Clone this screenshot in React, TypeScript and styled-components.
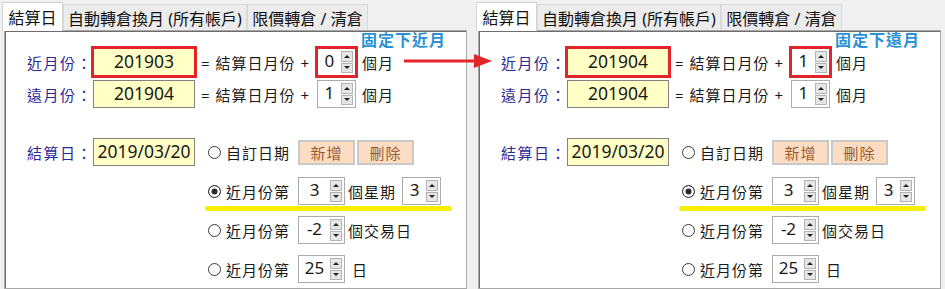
import React from 'react';
import styled, {createGlobalStyle} from "styled-components";

const GlobalStyle = createGlobalStyle`
    body {
        margin: 0;
        font-family: "Noto Sans", "Noto Sans CJK TC", sans-serif;
        color: #1a1a1a;
    }
`

type PanelProps = {
    near: string
    nearOffset: number
    caption: string
}

const Panel = ({near, nearOffset, caption}: PanelProps) => {
    return (
        <Window>
            <TabStrip>
                <Tab $active $w={61}>結算日</Tab>
                <Tab $w={184}>自動轉倉換月 (所有帳戶)</Tab>
                <Tab $w={121}>限價轉倉 / 清倉</Tab>
            </TabStrip>
            <Body>
                <Caption>{caption}</Caption>
                <Row>
                    <Label>近月份：</Label>
                    <DateField $mark>{near}</DateField>
                    <Formula>= 結算日月份 +</Formula>
                    <Spinner value={nearOffset} width={39} ml={7} mark/>
                    <Unit $ml={6}>個月</Unit>
                </Row>
                <Row $mt={4}>
                    <Label>遠月份：</Label>
                    <DateField>201904</DateField>
                    <Formula>= 結算日月份 +</Formula>
                    <Spinner value={1} width={39} ml={7}/>
                    <Unit $ml={6}>個月</Unit>
                </Row>
                <Block>
                    <Row>
                        <Label>結算日：</Label>
                        <DateField>2019/03/20</DateField>
                    </Row>
                    <Options>
                        <OptionRow>
                            <Radio>自訂日期</Radio>
                            <PeachButton>新增</PeachButton>
                            <PeachButton $ml={2}>刪除</PeachButton>
                        </OptionRow>
                        <OptionRow $mark>
                            <Radio checked>近月份第</Radio>
                            <Spinner value={3} width={47}/>
                            <Unit $ml={3}>個星期</Unit>
                            <Spinner value={3} width={39} ml={6}/>
                        </OptionRow>
                        <OptionRow>
                            <Radio>近月份第</Radio>
                            <Spinner value={-2} width={47}/>
                            <Unit $ml={3}>個交易日</Unit>
                        </OptionRow>
                        <OptionRow>
                            <Radio>近月份第</Radio>
                            <Spinner value={25} width={47}/>
                            <Unit $ml={7}>日</Unit>
                        </OptionRow>
                    </Options>
                </Block>
            </Body>
        </Window>
    );
};

const Spinner = ({value, width, ml = 0, mark}: {value: number, width: number, ml?: number, mark?: boolean}) => (
    <SpinBox $w={width} $ml={ml} $mark={mark}>
        <SpinValue>{value}</SpinValue>
        <SpinButtons>
            <SpinBtn $dir="up"/>
            <SpinBtn $dir="down"/>
        </SpinButtons>
    </SpinBox>
)

const Radio = ({children, checked}: {children: React.ReactNode, checked?: boolean}) => (
    <RadioLabel>
        <RadioDot $on={checked}/>
        {children}
    </RadioLabel>
)

export default function App() {
    return (
        <Page>
            <GlobalStyle/>
            <Panel near="201903" nearOffset={0} caption="固定下近月"/>
            <Panel near="201904" nearOffset={1} caption="固定下遠月"/>
            <Arrow width="90" height="16" viewBox="0 0 90 16">
                <line x1="0" y1="8" x2="74" y2="8" stroke="#e3242b" strokeWidth="3"/>
                <polygon points="70,1 88,8 70,15" fill="#e3242b"/>
            </Arrow>
        </Page>
    );
}

const Page = styled.div`
    position: relative;
    display: flex;
    gap: 3px;
    height: 289px;
    overflow: hidden;
    background: #f0f0f0;
`

const Window = styled.div`
    width: 472px;
    display: flex;
    flex-direction: column;
`

const TabStrip = styled.div`
    display: flex;
    align-items: flex-end;
    height: 30px;
    padding-left: 2px;
    position: relative;
    z-index: 1;
`

const Tab = styled.div<{ $active?: boolean, $w: number }>`
    box-sizing: border-box;
    width: ${p => p.$w}px;
    height: ${p => p.$active ? 29 : 26}px;
    margin-bottom: ${p => p.$active ? -1 : 0}px;
    display: flex;
    align-items: center;
    justify-content: center;
    font-size: 16px;
    color: #111;
    background: ${p => p.$active ? '#fff' : '#ececec'};
    border: 1px solid ${p => p.$active ? '#d4d4d4' : '#d9d9d9'};
    border-bottom: none;
`

const Body = styled.div`
    position: relative;
    box-sizing: border-box;
    margin-left: 4px;
    width: 463px;
    flex: 1;
    background: #fff;
    border: 1px solid #a8a8a8;
    box-shadow: inset 1px 1px 0 #6d6d6d;
    padding: 17px 0 0 22px;
    display: flex;
    flex-direction: column;
`

const Caption = styled.div`
    position: absolute;
    top: 2px;
    right: 20px;
    font-size: 16px;
    line-height: 14px;
    font-weight: bold;
    letter-spacing: 1px;
    color: #2a92d4;
`

const Row = styled.div<{ $mt?: number }>`
    display: flex;
    align-items: center;
    height: 28px;
    margin-top: ${p => p.$mt || 0}px;
`

const Block = styled.div`
    display: flex;
    align-items: flex-start;
    margin-top: 30px;
`

const Label = styled.span`
    width: 66px;
    font-size: 15px;
    letter-spacing: 1.5px;
    color: #2a2a96;
`

const DateField = styled.div<{ $mark?: boolean }>`
    box-sizing: border-box;
    width: 102px;
    height: 28px;
    border: 1px solid #828282;
    background: #ffffc6;
    display: flex;
    align-items: center;
    justify-content: center;
    font-size: 17.5px;
    padding-bottom: 2px;
    outline: ${p => p.$mark ? '3px solid #e3242b' : 'none'};
    outline-offset: -1px;
`

const Formula = styled.span`
    margin-left: 6px;
    font-size: 15px;
    letter-spacing: 1px;
`

const Unit = styled.span<{ $ml: number }>`
    margin-left: ${p => p.$ml}px;
    font-size: 15px;
    letter-spacing: 1px;
`

const SpinBox = styled.div<{ $w: number, $ml: number, $mark?: boolean }>`
    box-sizing: border-box;
    width: ${p => p.$w}px;
    height: 28px;
    margin-left: ${p => p.$ml}px;
    border: 1px solid #ababab;
    background: #fff;
    display: flex;
    outline: ${p => p.$mark ? '3px solid #e3242b' : 'none'};
    outline-offset: -1px;
`

const SpinValue = styled.div`
    flex: 1;
    display: flex;
    align-items: center;
    justify-content: center;
    font-size: 17px;
    padding-bottom: 4px;
`

const SpinButtons = styled.div`
    width: 12px;
    padding: 2px 2px 2px 0;
    display: flex;
    flex-direction: column;
    gap: 1px;
`

const SpinBtn = styled.div<{ $dir: 'up' | 'down' }>`
    flex: 1;
    background: #e6e6e6;
    border: 1px solid #b4b4b4;
    display: flex;
    align-items: center;
    justify-content: center;

    &::before {
        content: '';
        border-left: 3px solid transparent;
        border-right: 3px solid transparent;
        ${p => p.$dir === 'up' ? 'border-bottom: 3px solid #222;' : 'border-top: 3px solid #222;'}
    }
`

const Options = styled.div`
    margin-left: 13px;
    display: flex;
    flex-direction: column;
    gap: 11px;
`

const OptionRow = styled.div<{ $mark?: boolean }>`
    position: relative;
    display: flex;
    align-items: center;
    height: 28px;

    ${p => p.$mark && `
    &::after {
        content: '';
        position: absolute;
        left: -3px;
        top: 29px;
        width: 247px;
        height: 5px;
        border-radius: 3px;
        background: #f6ee00;
    }
    `}
`

const RadioLabel = styled.label`
    width: 90px;
    display: flex;
    align-items: center;
    gap: 5px;
    font-size: 15px;
    letter-spacing: 1px;
`

const RadioDot = styled.span<{ $on?: boolean }>`
    box-sizing: border-box;
    width: 13px;
    height: 13px;
    border-radius: 50%;
    border: 1px solid #3a3a3a;
    background: ${p => p.$on ? '#2a2a2a' : '#fff'};
    box-shadow: inset 0 0 0 2.5px #fff;
`

const PeachButton = styled.button<{ $ml?: number }>`
    box-sizing: border-box;
    width: 57px;
    height: 25px;
    margin-left: ${p => p.$ml || 0}px;
    padding: 0;
    background: #fcdcc2;
    border: 2px solid #c9c9c9;
    font-family: inherit;
    font-size: 15px;
    letter-spacing: 1px;
    color: #9a5b30;
`

const Arrow = styled.svg`
    position: absolute;
    left: 404px;
    top: 53px;
`
